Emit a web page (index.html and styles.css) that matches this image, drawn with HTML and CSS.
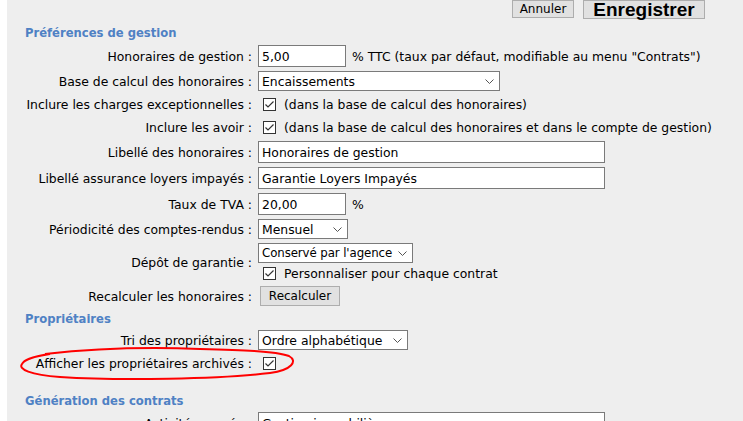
FILE: index.html
```html
<!DOCTYPE html>
<html lang="fr">
  <head>
    <meta charset="UTF-8" />
    <title>Paramètres</title>
    <link rel="stylesheet" href="styles.css">
  </head>
  <body>
    <div class="page">
      <div class="toolbar">
        <button class="btn">Annuler</button>
        <button class="btn btn-save">Enregistrer</button>
      </div>

      <h2 class="group-title first">Préférences de gestion</h2>
      <div class="form">
        <label class="lbl">Honoraires de gestion :</label>
        <div class="field">
          <input class="txt short" value="5,00" />
          <span>% TTC (taux par défaut, modifiable au menu "Contrats")</span>
        </div>

        <label class="lbl">Base de calcul des honoraires :</label>
        <div class="field">
          <div class="sel" style="width: 242px;">
            <select><option>Encaissements</option></select>
            <svg class="chev" width="9" height="6" viewBox="0 0 9 6"><path d="M0.5 0.5 L4.5 4.5 L8.5 0.5" fill="none" stroke="#555" stroke-width="1"/></svg>
          </div>
        </div>

        <label class="lbl">Inclure les charges exceptionnelles :</label>
        <div class="field check-row">
          <svg class="cb" width="13" height="13" viewBox="0 0 13 13"><rect x="0.5" y="0.5" width="12" height="12" fill="#fff" stroke="#333"/><path d="M2.5 6.5 L5 9 L10.5 3.5" fill="none" stroke="#333" stroke-width="1.2"/></svg>
          <span>(dans la base de calcul des honoraires)</span>
        </div>

        <label class="lbl">Inclure les avoir :</label>
        <div class="field check-row">
          <svg class="cb" width="13" height="13" viewBox="0 0 13 13"><rect x="0.5" y="0.5" width="12" height="12" fill="#fff" stroke="#333"/><path d="M2.5 6.5 L5 9 L10.5 3.5" fill="none" stroke="#333" stroke-width="1.2"/></svg>
          <span>(dans la base de calcul des honoraires et dans le compte de gestion)</span>
        </div>

        <label class="lbl">Libellé des honoraires :</label>
        <div class="field">
          <input class="txt long" value="Honoraires de gestion" />
        </div>

        <label class="lbl">Libellé assurance loyers impayés :</label>
        <div class="field">
          <input class="txt long" value="Garantie Loyers Impayés" />
        </div>

        <label class="lbl">Taux de TVA :</label>
        <div class="field">
          <input class="txt short" value="20,00" />
          <span>%</span>
        </div>

        <label class="lbl">Périodicité des comptes-rendus :</label>
        <div class="field">
          <div class="sel" style="width: 90px;">
            <select><option>Mensuel</option></select>
            <svg class="chev" width="9" height="6" viewBox="0 0 9 6"><path d="M0.5 0.5 L4.5 4.5 L8.5 0.5" fill="none" stroke="#555" stroke-width="1"/></svg>
          </div>
        </div>

        <label class="lbl">Dépôt de garantie :</label>
        <div class="field stack">
          <div class="sel tight" style="width: 155px;">
            <select><option>Conservé par l'agence</option></select>
            <svg class="chev" width="9" height="6" viewBox="0 0 9 6"><path d="M0.5 0.5 L4.5 4.5 L8.5 0.5" fill="none" stroke="#555" stroke-width="1"/></svg>
          </div>
          <div class="check-line">
            <svg class="cb" width="13" height="13" viewBox="0 0 13 13"><rect x="0.5" y="0.5" width="12" height="12" fill="#fff" stroke="#333"/><path d="M2.5 6.5 L5 9 L10.5 3.5" fill="none" stroke="#333" stroke-width="1.2"/></svg>
            <span>Personnaliser pour chaque contrat</span>
          </div>
        </div>

        <label class="lbl">Recalculer les honoraires :</label>
        <div class="field">
          <button class="btn btn-small">Recalculer</button>
        </div>
      </div>

      <h2 class="group-title">Propriétaires</h2>
      <div class="form">
        <label class="lbl">Tri des propriétaires :</label>
        <div class="field">
          <div class="sel" style="width: 150px;">
            <select><option>Ordre alphabétique</option></select>
            <svg class="chev" width="9" height="6" viewBox="0 0 9 6"><path d="M0.5 0.5 L4.5 4.5 L8.5 0.5" fill="none" stroke="#555" stroke-width="1"/></svg>
          </div>
        </div>

        <label class="lbl">Afficher les propriétaires archivés :</label>
        <div class="field check-row">
          <svg class="cb" width="13" height="13" viewBox="0 0 13 13"><rect x="0.5" y="0.5" width="12" height="12" fill="#fff" stroke="#333"/><path d="M2.5 6.5 L5 9 L10.5 3.5" fill="none" stroke="#333" stroke-width="1.2"/></svg>
        </div>
      </div>

      <h2 class="group-title gap-top">Génération des contrats</h2>
      <div class="form">
        <label class="lbl">Activité exercée :</label>
        <div class="field">
          <input class="txt long" value="Gestion immobilière" />
        </div>
      </div>

      <!-- annotation drawn over the screenshot -->
      <svg class="mark" width="300" height="45" viewBox="0 0 300 45">
        <path d="M45 14 C 90 9, 150 7, 200 9 C 240 10, 275 11, 289 16 C 298 21, 292 30, 270 33 C 220 39, 120 41, 60 37 C 30 35, 18 29, 22 24 C 24 20, 30 17, 50 14" fill="none" stroke="#f00" stroke-width="2"/>
      </svg>
    </div>
  </body>
</html>
```

FILE: styles.css
```css
body {
  margin: 0;
  background: #ffffff;
  font-family: "DejaVu Sans", Verdana, sans-serif;
  font-size: 12.4px;
  color: #000000;
  overflow: hidden;
}
.page {
  position: relative;
  margin-left: 7px;
  min-height: 421px;
  background: #eeeeee;
  padding-left: 18px;
}
.toolbar {
  display: flex;
  justify-content: flex-end;
  align-items: flex-start;
  gap: 9px;
  height: 18px;
  padding-right: 38px;
}
.btn {
  font-family: inherit;
  font-size: 12px;
  background: #e1e1e1;
  border: 1px solid #adadad;
  color: #000;
  padding: 0;
  height: 20px;
}
.toolbar .btn {
  height: 18px;
  width: 62px;
  line-height: 14px;
}
.toolbar .btn-save {
  font-family: "Liberation Sans", Arial, sans-serif;
  font-size: 19px;
  font-weight: bold;
  width: 122px;
  height: 19px;
  line-height: 14px;
}
.btn-small {
  width: 80px;
  margin-left: 2px;
}
.group-title {
  margin: 3px 0 1px;
  font-size: 11.6px;
  line-height: 16px;
  font-weight: bold;
  color: #4f81c4;
}
.group-title.first {
  margin: 7px 0 2px;
}
.gap-top {
  margin-top: 18px;
}
.form {
  display: grid;
  grid-template-columns: 227px 1fr;
  column-gap: 6px;
}
.lbl {
  display: flex;
  align-items: center;
  justify-content: flex-end;
  white-space: nowrap;
}
.field {
  display: flex;
  align-items: center;
  gap: 6px;
  min-height: 24px;
  white-space: nowrap;
}
.check-row {
  min-height: 23px;
  gap: 8px;
}
.check-row .cb {
  margin-left: 5px;
}
.txt {
  box-sizing: border-box;
  height: 22px;
  margin: 2px 0;
  padding: 1px 3px;
  border: 1px solid #7a7a7a;
  background: #fff;
  font-family: inherit;
  font-size: 12.4px;
  color: #000;
}
.short {
  width: 88px;
}
.long {
  width: 347px;
}
.sel {
  position: relative;
  height: 20px;
}
.sel select {
  appearance: none;
  box-sizing: border-box;
  width: 100%;
  height: 20px;
  padding: 0 14px 0 3px;
  border: 1px solid #7a7a7a;
  background: #fff;
  font-family: inherit;
  font-size: 12.4px;
  color: #000;
}
.sel.tight select {
  font-size: 11.8px;
  letter-spacing: -0.1px;
}
.chev {
  position: absolute;
  right: 6px;
  top: 8px;
}
.stack {
  flex-direction: column;
  align-items: flex-start;
  gap: 0;
  padding-top: 2px;
}
.check-line {
  display: flex;
  align-items: center;
  gap: 8px;
  height: 21px;
  padding-left: 5px;
}
.mark {
  position: absolute;
  left: -7px;
  top: 340px;
}
```
